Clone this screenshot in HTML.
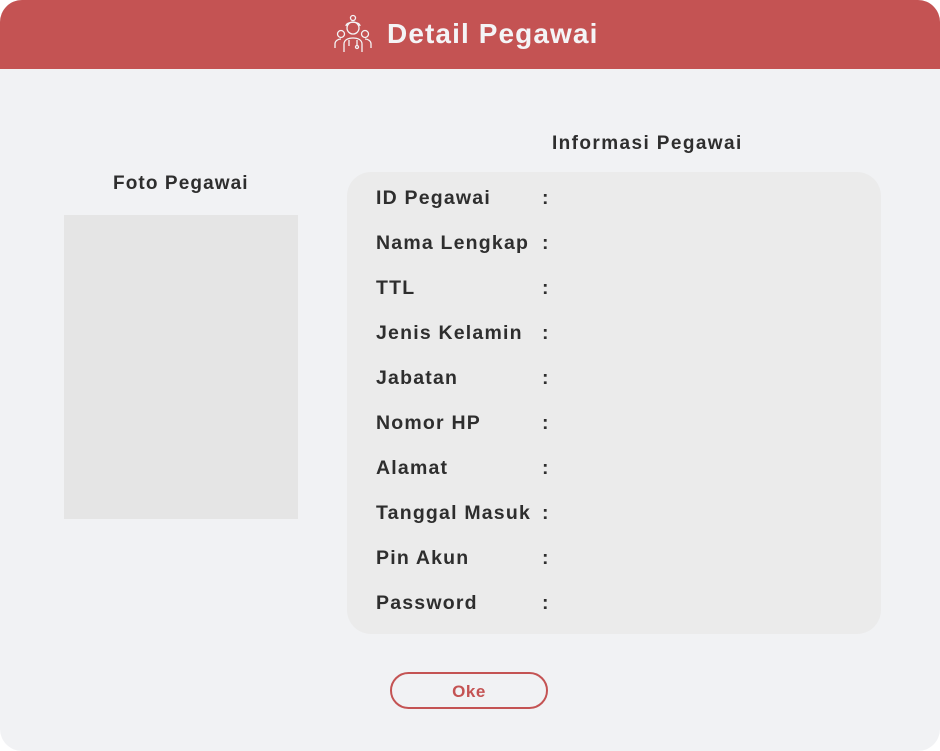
<!DOCTYPE html>
<html><head><style>
html,body{margin:0;padding:0;background:#fff;}
body{width:940px;height:751px;overflow:hidden;font-family:"Liberation Sans",Arial,sans-serif;}
.card{position:absolute;left:0;top:0;width:940px;height:751px;border-radius:22px;background:#f1f2f4;overflow:hidden;}
.hdr{position:absolute;left:0;top:0;width:940px;height:69px;background:#c45353;}
.title{position:absolute;left:387px;top:18px;font-size:28px;font-weight:bold;color:#f4f4f6;letter-spacing:1.1px;}
.t{position:absolute;font-weight:bold;color:#2e2e2e;font-size:19px;letter-spacing:1.1px;}
.photo{position:absolute;left:64px;top:215px;width:234px;height:304px;background:#e5e5e5;}
.info{position:absolute;left:347px;top:172px;width:534px;height:462px;background:#ebebeb;border-radius:24px;}
.row{position:absolute;left:376px;font-size:19.5px;font-weight:bold;color:#2e2e2e;letter-spacing:1.2px;}
.col{position:absolute;left:542px;font-size:19.5px;font-weight:bold;color:#2e2e2e;}
.btn{position:absolute;left:390px;top:672px;width:154px;height:33px;border:2px solid #c45353;border-radius:19px;color:#c45353;font-weight:bold;font-size:17px;text-align:center;line-height:35px;letter-spacing:0.5px;}
</style></head><body>
<div class="card">
<div class="hdr">
<svg style="position:absolute;left:333px;top:14px" width="40" height="40" viewBox="0 0 40 40" fill="none" stroke="#f4f4f6" stroke-width="1.3">
<circle cx="20" cy="4" r="2.5"/>
<path d="M13 12c0-5 14-5 14 0"/>
<circle cx="20" cy="14" r="6"/>
<path d="M11 38v-8c0-4 4-6 9-6s9 2 9 6v8"/>
<circle cx="8" cy="20" r="3.5"/><circle cx="32" cy="20" r="3.5"/>
<path d="M2 34v-4c0-3 3-5 6-5M38 34v-4c0-3-3-5-6-5"/>
<path d="M16 26v6M24 26v6"/><circle cx="24" cy="33" r="1.5"/>
</svg>
<div class="title">Detail Pegawai</div>
</div>
<div class="t" style="left:113px;top:173px">Foto Pegawai</div>
<div class="photo"></div>
<div class="t" style="left:552px;top:133px;letter-spacing:1.4px">Informasi Pegawai</div>
<div class="info"></div>
<div class="row" style="top:187px">ID Pegawai</div><div class="col" style="top:187px">:</div>
<div class="row" style="top:232px">Nama Lengkap</div><div class="col" style="top:232px">:</div>
<div class="row" style="top:277px">TTL</div><div class="col" style="top:277px">:</div>
<div class="row" style="top:322px">Jenis Kelamin</div><div class="col" style="top:322px">:</div>
<div class="row" style="top:367px">Jabatan</div><div class="col" style="top:367px">:</div>
<div class="row" style="top:412px">Nomor HP</div><div class="col" style="top:412px">:</div>
<div class="row" style="top:457px">Alamat</div><div class="col" style="top:457px">:</div>
<div class="row" style="top:502px">Tanggal Masuk</div><div class="col" style="top:502px">:</div>
<div class="row" style="top:547px">Pin Akun</div><div class="col" style="top:547px">:</div>
<div class="row" style="top:592px">Password</div><div class="col" style="top:592px">:</div>
<div class="btn">Oke</div>
</div>
</body></html>
